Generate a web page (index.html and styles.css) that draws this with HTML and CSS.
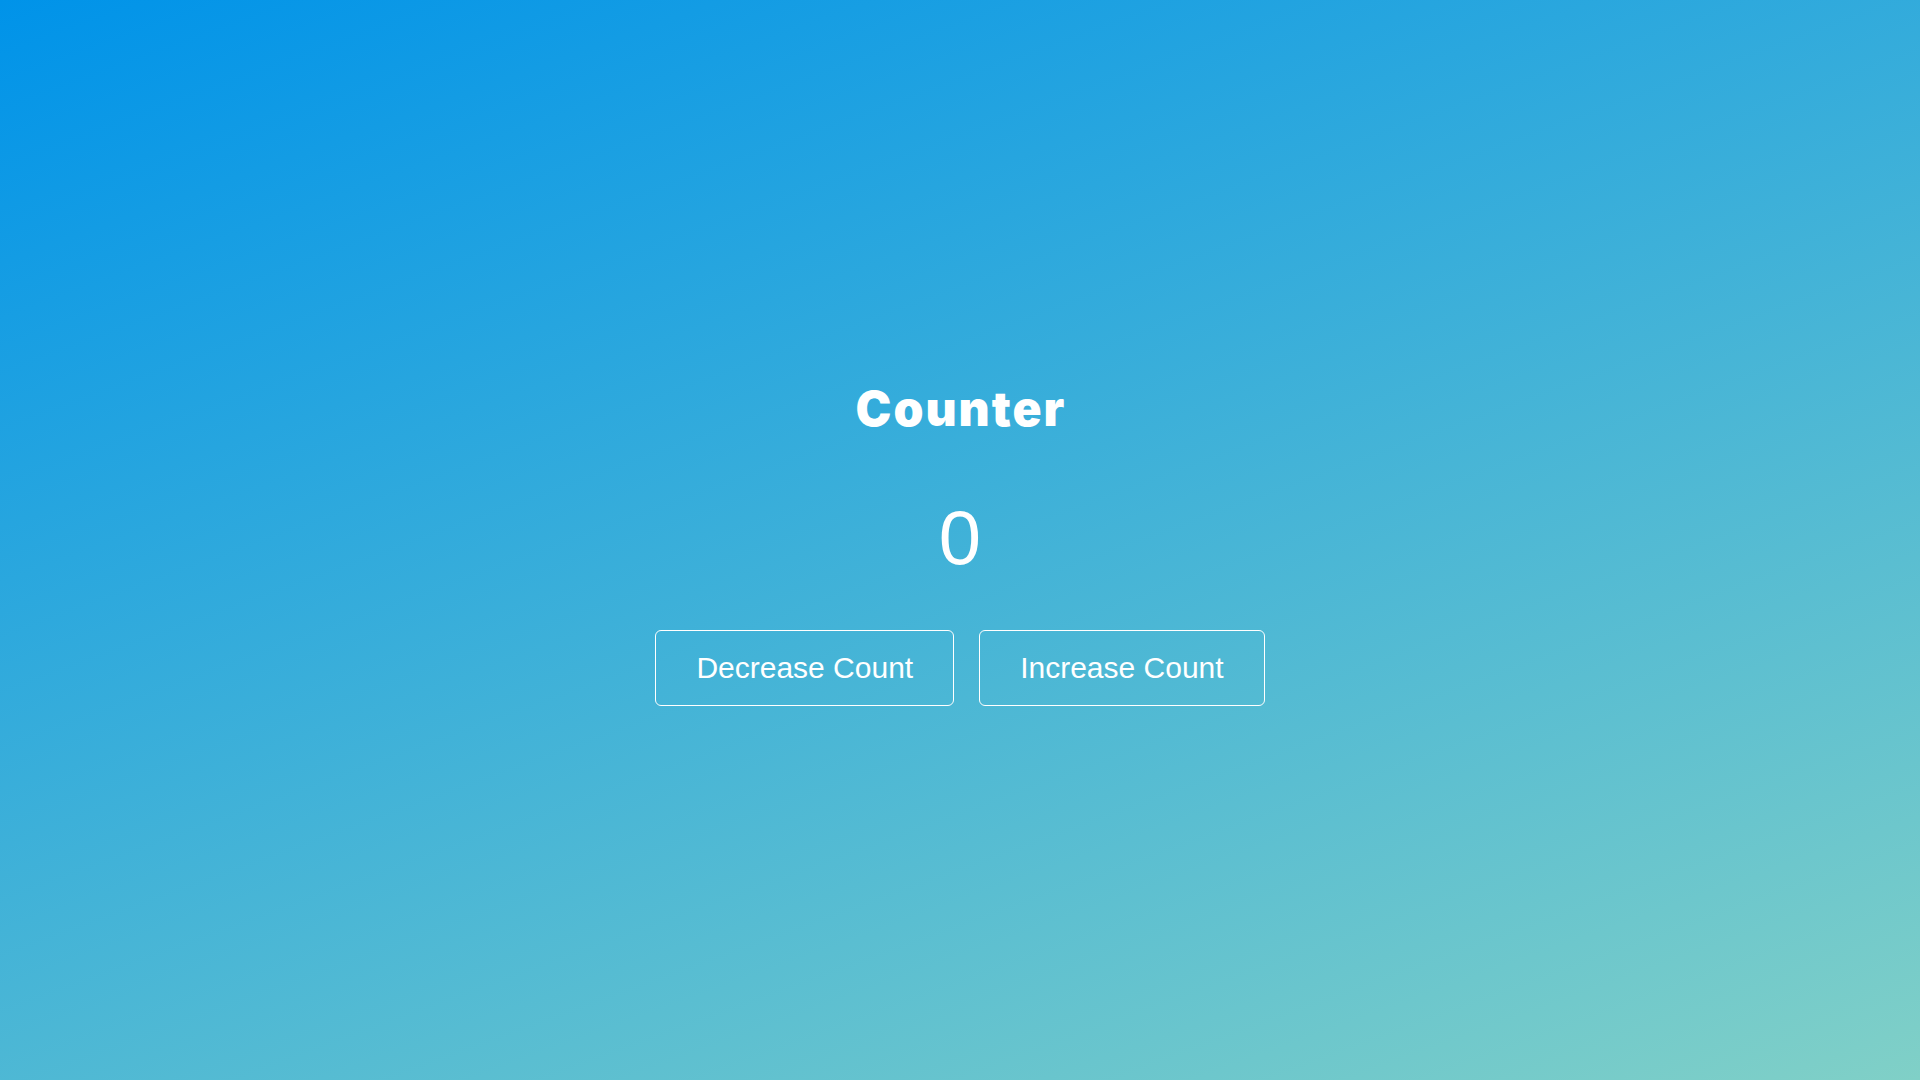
FILE: index.html
```html
<!DOCTYPE html>
<html lang="en">
<head>
<meta charset="utf-8">
<title>Counter</title>
<link rel="stylesheet" href="styles.css">
</head>
<body>
<main class="app">
  <h1 class="title">Counter</h1>
  <div class="count">0</div>
  <div class="actions">
    <button class="btn">Decrease Count</button>
    <button class="btn">Increase Count</button>
  </div>
</main>
</body>
</html>
```
FILE: styles.css
```css
html, body {
  margin: 0;
  padding: 0;
  height: 100%;
}
body {
  background-color: #0093E9;
  background-image: linear-gradient(160deg, #0093E9 0%, #80D0C7 100%);
  font-family: "Liberation Sans", Arial, sans-serif;
  color: #fff;
}
.app {
  height: 100vh;
  display: flex;
  flex-direction: column;
  align-items: center;
  justify-content: center;
  padding-top: 6px;
  box-sizing: border-box;
}
.title {
  font-family: Inter, "Open Sans", sans-serif;
  font-weight: 900;
  font-size: 48px;
  line-height: 1.2;
  margin: 0 0 57px;
  letter-spacing: 2px;
  text-indent: 2px;
}
.count {
  font-size: 76px;
  line-height: 1.15;
  margin: 0 0 49px;
}
.actions {
  display: flex;
  gap: 25px;
}
.btn {
  font-family: "Liberation Sans", Arial, sans-serif;
  font-size: 30px;
  color: #fff;
  background: transparent;
  border: 1px solid #fff;
  border-radius: 6px;
  padding: 19px 40px;
  line-height: 36px;
  cursor: pointer;
}
```
